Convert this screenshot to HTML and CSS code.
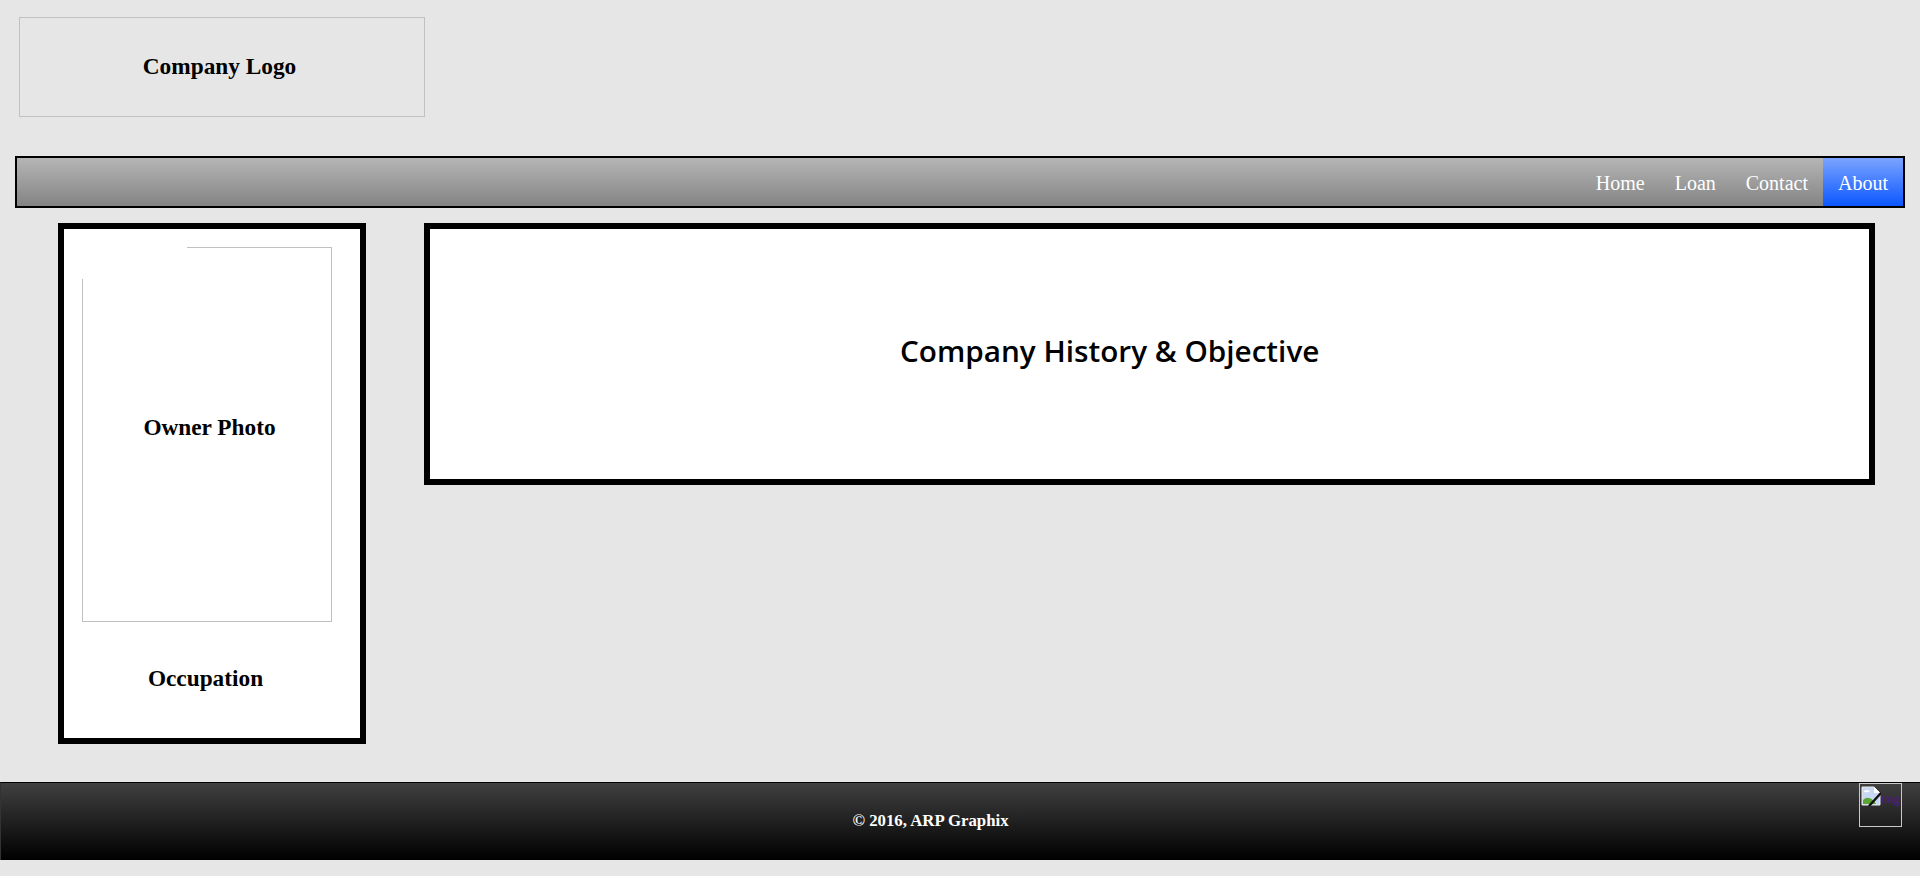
FILE: index.html
```html
<!DOCTYPE html>
<html lang="en">
<head>
  <meta charset="utf-8">
  <meta name="viewport" content="width=device-width, initial-scale=1.0">
  <title>Company</title>
  <link rel="stylesheet" href="styles.css">
</head>
<body>
  <header class="top">
    <div class="logo">Company Logo</div>
  </header>

  <nav class="nav">
    <a href="#" class="nav-link">Home</a>
    <a href="#" class="nav-link">Loan</a>
    <a href="#" class="nav-link">Contact</a>
    <a href="#" class="nav-link active">About</a>
  </nav>

  <div class="content">
    <aside class="side">
      <div class="photo">Owner Photo</div>
      <div class="occupation">Occupation</div>
    </aside>
    <main class="history">
      <h1 class="history-title">Company History &amp; Objective</h1>
    </main>
  </div>

  <footer class="footer">
    <span class="copy">&copy; 2016, ARP Graphix</span>
    <a href="#" class="badge">
      <svg class="broken" width="20" height="20" viewBox="0 0 20 20">
        <path d="M1 1H13L19 7V19H1Z" fill="#c9d8f2" stroke="#e8e8e8"/>
        <path d="M13 1V7H19Z" fill="#fff"/>
        <path d="M3 5Q6 3 9 5Q7 7 3 6Z" fill="#fff"/>
        <path d="M2 18V14Q7 9 13 15L15 18Z" fill="#5aa632"/>
        <path d="M8 20L20 7" stroke="#111" stroke-width="2.5"/>
      </svg>
      <span class="alt">img</span>
    </a>
  </footer>
</body>
</html>
```

FILE: styles.css
```css
html, body {
  margin: 0;
  height: 100%;
}
body {
  background: #e6e6e6;
  color: #000;
  font-family: "Liberation Serif", "Times New Roman", serif;
  overflow: hidden;
}

/* logo */
.top {
  padding: 17px 0 0 19px;
}
.logo {
  box-sizing: border-box;
  width: 406px;
  height: 100px;
  border: 1px solid #c0c0c0;
  display: flex;
  align-items: center;
  justify-content: center;
  padding: 0 5px 2px 0;
  font-size: 23.3px;
  font-weight: bold;
}

/* nav bar */
.nav {
  box-sizing: border-box;
  height: 52px;
  margin: 39px 15px 0 15px;
  border: 2px solid #000;
  background: linear-gradient(#b5b5b5, #848484);
  display: flex;
  justify-content: flex-end;
}
.nav-link {
  display: flex;
  align-items: center;
  padding: 2px 15px 0;
  font-size: 20px;
  color: #fff;
  text-decoration: none;
}
.active {
  background: linear-gradient(#7ba4ff, #0c57ff);
}

/* columns */
.content {
  display: flex;
  align-items: flex-start;
  gap: 58px;
  margin-top: 15px;
  padding-left: 58px;
}
.side {
  box-sizing: border-box;
  width: 308px;
  height: 521px;
  border: 6px solid #000;
  background: #fff;
  padding: 18px 0 0 18px;
}
.photo {
  position: relative;
  box-sizing: border-box;
  width: 250px;
  height: 375px;
  border: 1px solid #c0c0c0;
  display: flex;
  align-items: center;
  justify-content: center;
  padding: 0 0 14px 5px;
  font-size: 23.3px;
  font-weight: bold;
}
/* gap in the frame's corner */
.photo::before {
  content: "";
  position: absolute;
  top: -1px;
  left: -1px;
  width: 105px;
  height: 32px;
  background: #fff;
}
.occupation {
  width: 250px;
  margin-top: 43px;
  padding-right: 3px;
  box-sizing: border-box;
  text-align: center;
  font-size: 23.3px;
  font-weight: bold;
}
.history {
  box-sizing: border-box;
  width: 1451px;
  height: 262px;
  border: 6px solid #000;
  background: #fff;
  display: flex;
  align-items: center;
  padding: 0 0 0 470px;
}
.history-title {
  margin: 0 0 8px;
  font-family: "Open Sans", sans-serif;
  font-size: 29.7px;
  font-weight: 600;
  white-space: nowrap;
}

/* footer */
.footer {
  position: relative;
  box-sizing: border-box;
  height: 78px;
  margin-top: 38px;
  border-top: 1px solid #000;
  border-left: 1px solid #333;
  background: linear-gradient(#404040, #000);
  display: flex;
  align-items: center;
  justify-content: center;
  padding: 0 60px 2px 0;
}
.copy {
  color: #fff;
  font-size: 16.8px;
  font-weight: bold;
}
.badge {
  position: absolute;
  top: 0;
  right: 18px;
  box-sizing: border-box;
  width: 43px;
  height: 44px;
  border: 1px solid #c8c8c8;
  padding: 2px 0 0 1px;
  display: flex;
  overflow: hidden;
  text-decoration: none;
}
.broken {
  flex: none;
}
.alt {
  color: #551a8b;
  font-size: 12px;
  line-height: 26px;
}
```
